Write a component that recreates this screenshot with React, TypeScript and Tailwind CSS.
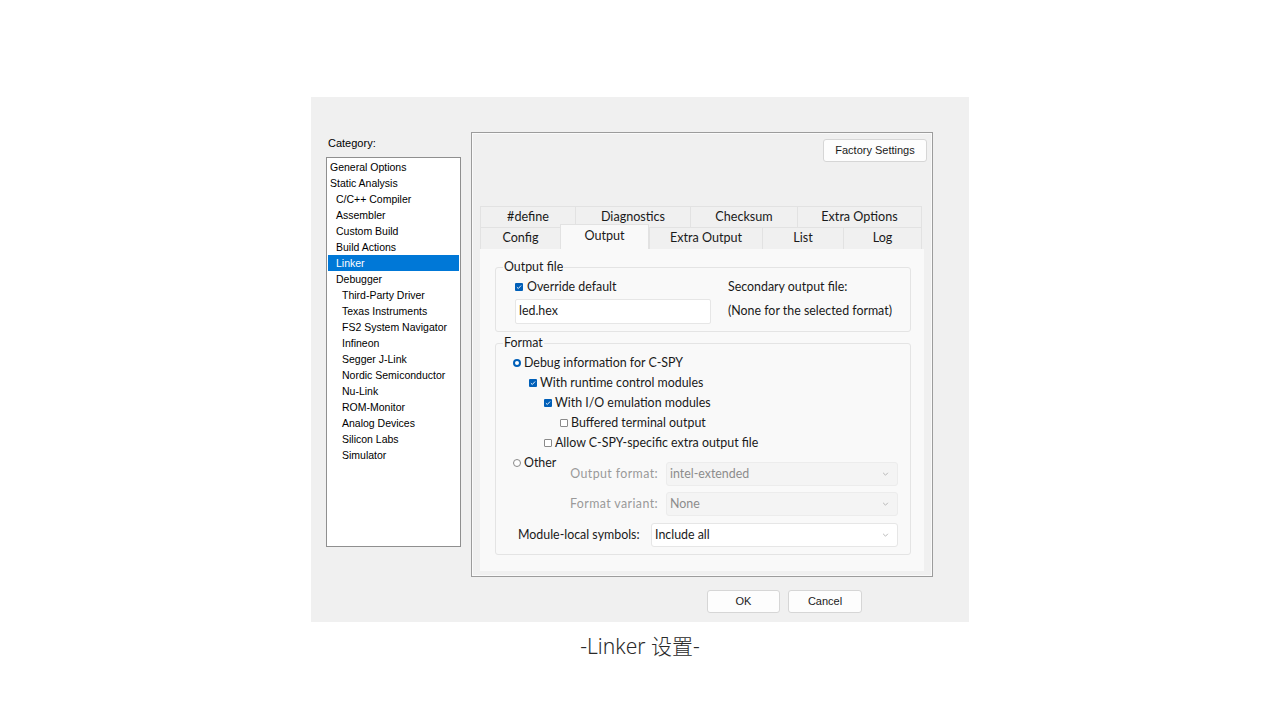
import type { ReactNode } from 'react';

// ------------------------------------------------------------------
// Small widgets
// ------------------------------------------------------------------

function Check({ on }: { on?: boolean }) {
  if (on) {
    return (
      <span className="flex h-[8px] w-[8px] items-center justify-center rounded-[1px] bg-[#005fb8]">
        <svg viewBox="0 0 8 8" className="h-[6px] w-[6px]">
          <path d="M1.2 4.2 3.1 6 6.8 2" fill="none" stroke="#fff" strokeWidth="1.2" />
        </svg>
      </span>
    );
  }
  return <span className="h-[8px] w-[8px] rounded-[1px] border border-[#8a8a8a] bg-white" />;
}

function Radio({ on }: { on?: boolean }) {
  if (on) {
    return <span className="h-[8px] w-[8px] rounded-full border-[2.5px] border-[#005fb8] bg-white" />;
  }
  return <span className="h-[8px] w-[8px] rounded-full border border-[#8a8a8a] bg-white" />;
}

function Chevron() {
  return (
    <svg viewBox="0 0 8 5" className="h-[4px] w-[7px]">
      <path d="M1 1 4 4 7 1" fill="none" stroke="#a8a8a8" strokeWidth="1" />
    </svg>
  );
}

function Select({ value, width, disabled }: { value: string; width: string; disabled?: boolean }) {
  return (
    <div
      className={`flex h-[24px] items-center justify-between rounded-[3px] border pl-[3px] pr-[8px] ${width} ${
        disabled ? 'border-[#ececec] bg-[#f4f4f4] text-[#8c8c8c]' : 'border-[#e6e6e6] bg-white text-[#1a1a1a]'
      }`}
    >
      <span>{value}</span>
      <Chevron />
    </div>
  );
}

function Group({ title, className = '', children }: { title: string; className?: string; children: ReactNode }) {
  return (
    <fieldset className={`rounded-[3px] border border-[#e4e4e4] ${className}`}>
      <legend className="ml-[7px] px-[1px] leading-[18px] text-[#1a1a1a]">{title}</legend>
      {children}
    </fieldset>
  );
}

function Button({ label, width }: { label: string; width: string }) {
  return (
    <div
      className={`flex h-[23px] items-center justify-center rounded-[3px] border border-[#d6d6d6] bg-[#fdfdfd] font-['Liberation_Sans',sans-serif] text-[11px] text-[#1a1a1a] ${width}`}
    >
      {label}
    </div>
  );
}

// ------------------------------------------------------------------
// Data
// ------------------------------------------------------------------

const categories: { label: string; level: number }[] = [
  { label: 'General Options', level: 0 },
  { label: 'Static Analysis', level: 0 },
  { label: 'C/C++ Compiler', level: 1 },
  { label: 'Assembler', level: 1 },
  { label: 'Custom Build', level: 1 },
  { label: 'Build Actions', level: 1 },
  { label: 'Linker', level: 1 },
  { label: 'Debugger', level: 1 },
  { label: 'Third-Party Driver', level: 2 },
  { label: 'Texas Instruments', level: 2 },
  { label: 'FS2 System Navigator', level: 2 },
  { label: 'Infineon', level: 2 },
  { label: 'Segger J-Link', level: 2 },
  { label: 'Nordic Semiconductor', level: 2 },
  { label: 'Nu-Link', level: 2 },
  { label: 'ROM-Monitor', level: 2 },
  { label: 'Analog Devices', level: 2 },
  { label: 'Silicon Labs', level: 2 },
  { label: 'Simulator', level: 2 },
];

const tabsTop = [
  { label: '#define', w: 'w-[95px]' },
  { label: 'Diagnostics', w: 'w-[115px]' },
  { label: 'Checksum', w: 'w-[107px]' },
  { label: 'Extra Options', w: 'w-[125px]' },
];

const tabsBottom = [
  { label: 'Config', w: 'w-[80px]' },
  { label: 'Output', w: 'w-[89px]', active: true },
  { label: 'Extra Output', w: 'w-[113px]' },
  { label: 'List', w: 'w-[81px]' },
  { label: 'Log', w: 'w-[79px]' },
];

// ------------------------------------------------------------------
// Page
// ------------------------------------------------------------------

export default function App() {
  return (
    <div className="h-[720px] w-[1280px] bg-white pl-[311px] pt-[97px]">
      <div className="flex h-[525px] w-[658px] flex-col bg-[#f0f0f0] pl-[15px] pt-[35px]">
        <div className="flex gap-[10px]">
          {/* category list */}
          <div className="w-[135px] pt-[4px] font-['Liberation_Sans',sans-serif] text-[10.5px] text-black">
            <div className="pl-[2px] text-[11px] leading-[14px]">Category:</div>
            <div className="mt-[7px] h-[390px] border border-[#8f8f8f] bg-white p-px">
              {categories.map((c) => (
                <div
                  key={c.label}
                  className={`h-[16px] leading-[16px] ${
                    c.level === 0 ? 'pl-[2px]' : c.level === 1 ? 'pl-[8px]' : 'pl-[14px]'
                  } ${c.label === 'Linker' ? 'bg-[#0078d7] text-white' : ''}`}
                >
                  {c.label}
                </div>
              ))}
            </div>
          </div>

          {/* options panel */}
          <div className="flex h-[445px] w-[462px] flex-col border border-[#9c9c9c] bg-[#f0f0f0] px-[8px] shadow-[inset_0_0_0_1px_#fafafa]">
            <div className="flex justify-end pt-[6px]">
              <div className="-mr-[3px]">
                <Button label="Factory Settings" width="w-[104px] h-[21px]" />
              </div>
            </div>

            <div className="mt-[44px] font-['Lato',sans-serif] text-[12.4px] text-[#1a1a1a]">
              <div className="flex h-[21px] w-[442px] text-[12.6px]">
                {tabsTop.map((t) => (
                  <div
                    key={t.label}
                    className={`flex items-center justify-center border-l border-t border-[#e2e2e2] bg-[#f0f0f0] last:border-r ${t.w}`}
                  >
                    {t.label}
                  </div>
                ))}
              </div>
              <div className="flex h-[22px] w-[442px] items-end text-[12.6px]">
                {tabsBottom.map((t) =>
                  t.active ? (
                    <div
                      key={t.label}
                      className={`relative z-10 flex h-[25px] items-start justify-center border-x border-t border-[#e2e2e2] bg-[#f9f9f9] pt-[2px] ${t.w}`}
                    >
                      {t.label}
                    </div>
                  ) : (
                    <div
                      key={t.label}
                      className={`flex h-[22px] items-center justify-center border-l border-t border-[#e2e2e2] bg-[#f0f0f0] last:border-r ${t.w}`}
                    >
                      {t.label}
                    </div>
                  ),
                )}
              </div>

              {/* tab page */}
              <div className="h-[322px] w-[444px] bg-[#f9f9f9] pl-[15px] pr-[13px] pt-[9px]">
                <Group title="Output file" className="h-[74px]">
                  <div className="flex">
                    <div className="w-[214px] pl-[19px]">
                      <div className="mt-px flex h-[20px] items-center gap-[4px]">
                        <Check on />
                        <span>Override default</span>
                      </div>
                      <div className="mt-[2px] flex h-[25px] w-[196px] items-center rounded-[2px] border border-[#e6e6e6] bg-white pl-[3px]">
                        led.hex
                      </div>
                    </div>
                    <div className="pl-[18px]">
                      <div className="mt-px flex h-[20px] items-center">Secondary output file:</div>
                      <div className="mt-[2px] flex h-[25px] items-center">(None for the selected format)</div>
                    </div>
                  </div>
                </Group>

                <Group title="Format" className="mt-[2px] h-[221px]">
                  <div className="mt-px flex h-[20px] items-center gap-[3px] pl-[17px]">
                    <Radio on />
                    <span>Debug information for C-SPY</span>
                  </div>
                  <div className="flex h-[20px] items-center gap-[3px] pl-[33px]">
                    <Check on />
                    <span>With runtime control modules</span>
                  </div>
                  <div className="flex h-[20px] items-center gap-[3px] pl-[48px]">
                    <Check on />
                    <span>With I/O emulation modules</span>
                  </div>
                  <div className="flex h-[20px] items-center gap-[3px] pl-[64px]">
                    <Check />
                    <span>Buffered terminal output</span>
                  </div>
                  <div className="flex h-[20px] items-center gap-[3px] pl-[48px]">
                    <Check />
                    <span>Allow C-SPY-specific extra output file</span>
                  </div>
                  <div className="flex h-[20px] items-center gap-[3px] pl-[17px]">
                    <Radio />
                    <span>Other</span>
                  </div>
                  <div className="-mt-[11px] flex items-center pl-[22px]">
                    <span className="w-[142px] pr-[2px] text-right tracking-[0.4px] text-[#9a9a9a]">Output format:</span>
                    <span className="w-[6px]" />
                    <Select value="intel-extended" width="w-[232px]" disabled />
                  </div>
                  <div className="mt-[6px] flex items-center pl-[22px]">
                    <span className="w-[142px] pr-[2px] text-right tracking-[0.4px] text-[#9a9a9a]">Format variant:</span>
                    <span className="w-[6px]" />
                    <Select value="None" width="w-[232px]" disabled />
                  </div>
                  <div className="mt-[7px] flex items-center pl-[22px]">
                    <span className="w-[133px]">Module-local symbols:</span>
                    <Select value="Include all" width="w-[247px]" />
                  </div>
                </Group>
              </div>
            </div>
          </div>
        </div>

        <div className="mt-[13px] flex justify-end gap-[8px] pr-[107px]">
          <Button label="OK" width="w-[73px]" />
          <Button label="Cancel" width="w-[74px]" />
        </div>
      </div>

      <div className="mt-[10px] w-[658px] text-center font-['Noto_Sans','Noto_Sans_CJK_SC',sans-serif] text-[21px] font-light leading-[28px] text-[#2a2a2a]">
        -Linker 设置-
      </div>
    </div>
  );
}
